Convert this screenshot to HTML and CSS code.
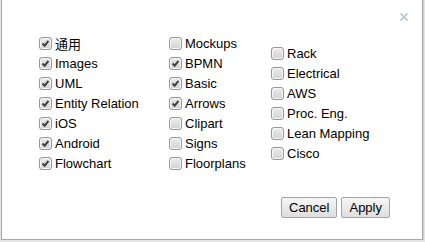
FILE: index.html
```html
<!DOCTYPE html>
<html>
<head>
<meta charset="UTF-8">
<title>Shapes</title>
<link rel="stylesheet" href="styles.css">
</head>
<body>
<div class="dialog">
    <div class="dialog-head">
        <svg class="close" width="8" height="8" viewBox="0 0 8 8"><path d="M0.5 0.5L7.5 7.5M7.5 0.5L0.5 7.5"/></svg>
    </div>

    <div class="libs">
        <div class="col col-1">
            <label class="item"><span class="box"><svg viewBox="0 0 13 13"><path d="M3 6.5L5.5 9L10 3.5"/></svg></span>通用</label>
            <label class="item"><span class="box"><svg viewBox="0 0 13 13"><path d="M3 6.5L5.5 9L10 3.5"/></svg></span>Images</label>
            <label class="item"><span class="box"><svg viewBox="0 0 13 13"><path d="M3 6.5L5.5 9L10 3.5"/></svg></span>UML</label>
            <label class="item"><span class="box"><svg viewBox="0 0 13 13"><path d="M3 6.5L5.5 9L10 3.5"/></svg></span>Entity Relation</label>
            <label class="item"><span class="box"><svg viewBox="0 0 13 13"><path d="M3 6.5L5.5 9L10 3.5"/></svg></span>iOS</label>
            <label class="item"><span class="box"><svg viewBox="0 0 13 13"><path d="M3 6.5L5.5 9L10 3.5"/></svg></span>Android</label>
            <label class="item"><span class="box"><svg viewBox="0 0 13 13"><path d="M3 6.5L5.5 9L10 3.5"/></svg></span>Flowchart</label>
        </div>
        <div class="col col-2">
            <label class="item"><span class="box"></span>Mockups</label>
            <label class="item"><span class="box"><svg viewBox="0 0 13 13"><path d="M3 6.5L5.5 9L10 3.5"/></svg></span>BPMN</label>
            <label class="item"><span class="box"><svg viewBox="0 0 13 13"><path d="M3 6.5L5.5 9L10 3.5"/></svg></span>Basic</label>
            <label class="item"><span class="box"><svg viewBox="0 0 13 13"><path d="M3 6.5L5.5 9L10 3.5"/></svg></span>Arrows</label>
            <label class="item"><span class="box"></span>Clipart</label>
            <label class="item"><span class="box"></span>Signs</label>
            <label class="item"><span class="box"></span>Floorplans</label>
        </div>
        <div class="col col-3">
            <label class="item"><span class="box"></span>Rack</label>
            <label class="item"><span class="box"></span>Electrical</label>
            <label class="item"><span class="box"></span>AWS</label>
            <label class="item"><span class="box"></span>Proc. Eng.</label>
            <label class="item"><span class="box"></span>Lean Mapping</label>
            <label class="item"><span class="box"></span>Cisco</label>
        </div>
    </div>

    <div class="dialog-foot">
        <button class="btn">Cancel</button>
        <button class="btn">Apply</button>
    </div>
</div>
</body>
</html>
```

FILE: styles.css
```css
/* Shape library dialog */
body{
    margin: 0;
    background: #e4e4e4;
    font-family: "Liberation Sans", Arial, "Noto Sans CJK SC", sans-serif;
    font-size: 13px;
    color: #000;
}
.dialog{
    width: 420px;
    height: 239px;
    margin: -1px 0 0 1px;
    border: 1px solid #a8a8a8;
    background: #fff;
    box-shadow: 1px 1px 0 #d0d0d0;
}
.dialog-head{
    display: flex;
    justify-content: flex-end;
    height: 33px;
    padding-right: 14px;
    box-sizing: border-box;
}
.close{
    margin-top: 13px;
}
.close path{
    stroke: #b7c7d7;
    stroke-width: 1.8;
    fill: none;
}
.libs{
    display: flex;
    align-items: center;
    padding-left: 37px;
}
.col{
    display: flex;
    flex-direction: column;
}
.col-1{
    width: 130px;
}
.col-2{
    width: 102px;
}
.item{
    display: flex;
    align-items: center;
    height: 20px;
    white-space: nowrap;
}
.box{
    width: 11px;
    height: 11px;
    margin-right: 3px;
    border: 1px solid #969696;
    border-radius: 3px;
    background: linear-gradient(#ececec, #d2d2d2);
    box-shadow: inset 0 0 0 1px #f6f6f6;
    flex: none;
}
.box svg{
    display: block;
    width: 11px;
    height: 11px;
}
.box path{
    stroke: #404040;
    stroke-width: 2.4;
    fill: none;
}
.dialog-foot{
    display: flex;
    justify-content: flex-end;
    gap: 4px;
    margin-top: 24px;
    padding-right: 32px;
}
.btn{
    height: 21px;
    padding: 0 7px;
    border: 1px solid #a3a3a3;
    border-radius: 2px;
    background: linear-gradient(#f6f6f6, #dedede);
    font-family: inherit;
    font-size: 13px;
    color: #000;
}
```
